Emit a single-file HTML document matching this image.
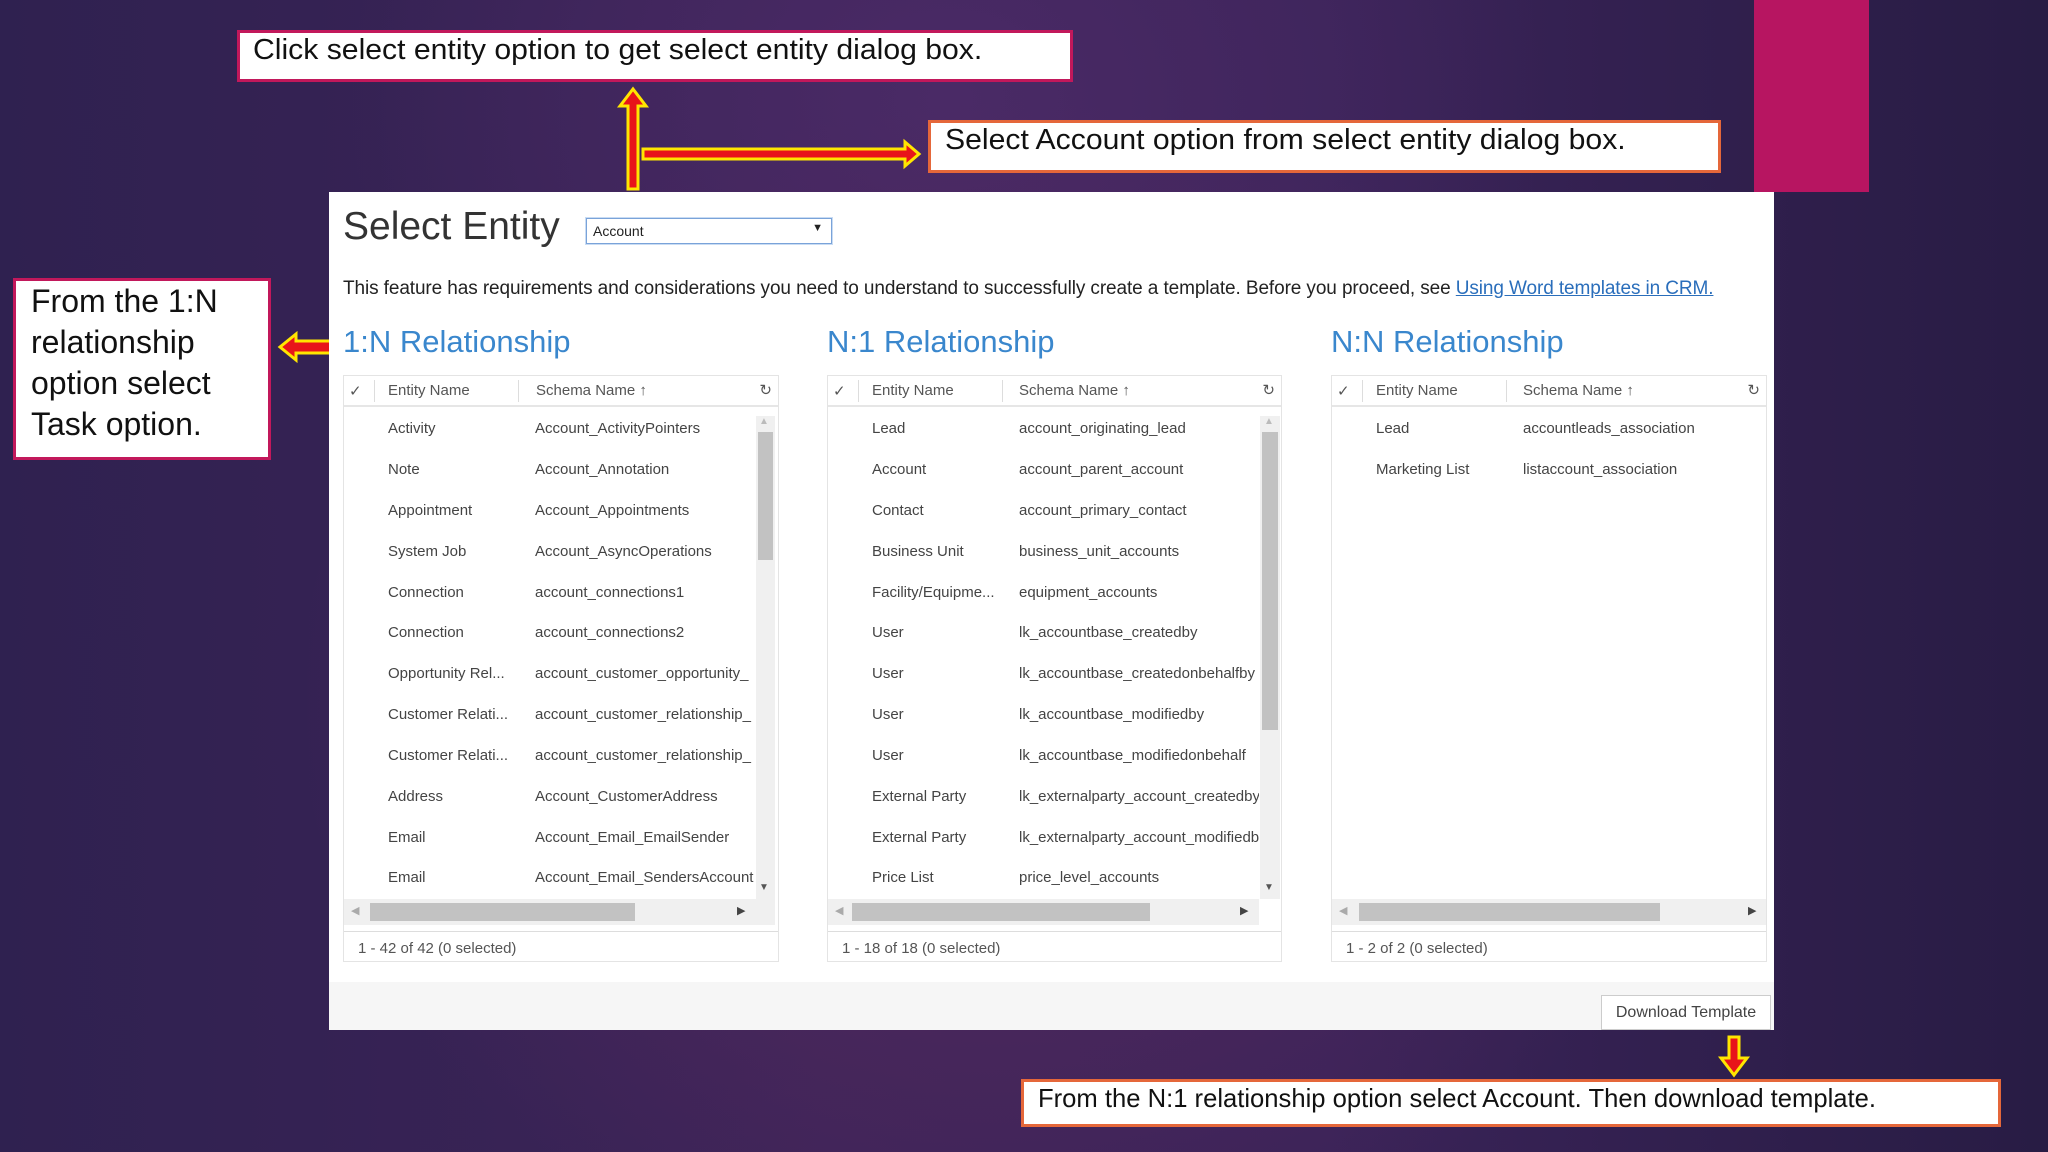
<!DOCTYPE html>
<html><head><meta charset="utf-8"><style>
*{margin:0;padding:0;box-sizing:border-box}
body{width:2048px;height:1152px;overflow:hidden;position:relative;font-family:"Liberation Sans",sans-serif;
background:radial-gradient(ellipse 700px 600px at 1000px 700px,#55295f 0%,rgba(85,41,95,0) 100%),radial-gradient(ellipse 600px 500px at 950px 100px,#4a2a66 0%,rgba(74,42,102,0) 100%),linear-gradient(90deg,#2f2150 0%,#3d2458 40%,#3a2358 65%,#281c44 100%);}
.abs{position:absolute}
.note{position:absolute;background:#fff;color:#111;white-space:nowrap;overflow:hidden}
.dlg{position:absolute;left:329px;top:192px;width:1445px;height:838px;background:#fff}
.grid{position:absolute;top:375px;height:587px;border:1px solid #e4e4e4;background:#fff}
.hd{position:absolute;left:0;right:0;top:0;height:31px;border-bottom:2px solid #e6e6e6;font-size:15px;color:#555}
.hd span{position:absolute;top:6px}
.row{position:absolute;font-size:15px;color:#444;white-space:nowrap}
.vs{position:absolute;background:#f0f0f0}
.th{position:absolute;background:#c2c2c2}
.ft{position:absolute;left:0;right:0;top:555px;height:1px;background:#ddd}
.fc{position:absolute;top:564px;left:14px;font-size:15px;color:#555}
h2{position:absolute;top:324px;font-weight:normal;font-size:31px;color:#3a87cd}
</style></head><body>
<div class="note" style="left:237px;top:30px;width:836px;height:52px;border:3px solid #c2185b;font-size:29px;padding:0 0 0 13px;line-height:34px"><span style="display:inline-block;transform:scaleX(1.04);transform-origin:left">Click select entity option to get select entity dialog box.</span></div>
<div class="note" style="left:928px;top:120px;width:793px;height:53px;border:3px solid #e5673a;font-size:29px;padding:0 0 0 14px;line-height:34px"><span style="display:inline-block;transform:scaleX(1.04);transform-origin:left">Select Account option from select entity dialog box.</span></div>
<div class="abs" style="left:1754px;top:0;width:115px;height:192px;background:#b71561"></div>
<div class="note" style="left:13px;top:278px;width:258px;height:182px;border:3px solid #c2185b;font-size:32px;padding:0 0 0 15px;line-height:41px;white-space:normal">From the 1:N relationship option select Task option.</div>
<div class="note" style="left:1021px;top:1079px;width:980px;height:48px;border:3px solid #e5673a;font-size:26px;padding:0 0 0 14px;line-height:32px"><span style="display:inline-block;transform:scaleX(0.985);transform-origin:left">From the N:1 relationship option select Account. Then download template.</span></div>
<svg class="abs" style="left:0;top:0" width="2048" height="1152">
<g fill="#e8141a" stroke="#ffe600" stroke-width="3">
<path d="M628 189 L628 106 L620 106 L633 89 L646 106 L638 106 L638 189 Z"/>
<path d="M643 149 L905 149 L905 142 L919 154 L905 166 L905 159 L643 159 Z"/>
<path d="M342 341 L296 341 L296 334 L280 347 L296 360 L296 353 L342 353 Z"/>
<path d="M1729 1037 L1739 1037 L1739 1058 L1747 1058 L1734 1075 L1721 1058 L1729 1058 Z"/>
</g></svg>
<div class="dlg">
<div class="abs" style="left:14px;top:13px;font-size:39px;color:#333;font-weight:300">Select Entity</div>
<div class="abs" style="left:257px;top:26px;width:246px;height:26px;border:1px solid #7aa3d9;box-shadow:0 0 0 1px #c9dcf3;font-size:14px;color:#222;padding:4px 6px">Account<span style="position:absolute;right:8px;top:3px;font-size:11px">▼</span></div>
<div class="abs" style="left:14px;top:86px;font-size:19px;color:#222;white-space:nowrap;letter-spacing:-0.1px">This feature has requirements and considerations you need to understand to successfully create a template. Before you proceed, see <span style="color:#2a6ebb;text-decoration:underline">Using Word templates in CRM.</span></div>
<div class="abs" style="left:0;top:790px;width:1445px;height:48px;background:#f6f6f6"></div>
<div class="abs" style="left:1272px;top:803px;width:170px;height:35px;border:1px solid #ccc;background:#fff;font-size:16px;color:#444;text-align:center;line-height:33px">Download Template</div>
</div>
<h2 style="left:343px">1:N Relationship</h2>
<h2 style="left:827px">N:1 Relationship</h2>
<h2 style="left:1331px">N:N Relationship</h2>

<div class="grid" style="left:343px;width:436px">
<div class="hd"><span style="left:5px">✓</span><span style="left:44px">Entity Name</span><span style="left:192px">Schema Name ↑</span><span style="right:6px;top:5px">↻</span><div class="abs" style="left:30px;top:4px;width:1px;height:22px;background:#ddd"></div><div class="abs" style="left:174px;top:4px;width:1px;height:22px;background:#ddd"></div></div>
<div class="abs" style="left:0;top:40px;width:410px;height:480px;overflow:hidden">
<div class="row" style="left:44px;top:4px">Activity</div><div class="row" style="left:191px;top:4px">Account_ActivityPointers</div>
<div class="row" style="left:44px;top:45px">Note</div><div class="row" style="left:191px;top:45px">Account_Annotation</div>
<div class="row" style="left:44px;top:86px">Appointment</div><div class="row" style="left:191px;top:86px">Account_Appointments</div>
<div class="row" style="left:44px;top:127px">System Job</div><div class="row" style="left:191px;top:127px">Account_AsyncOperations</div>
<div class="row" style="left:44px;top:168px">Connection</div><div class="row" style="left:191px;top:168px">account_connections1</div>
<div class="row" style="left:44px;top:208px">Connection</div><div class="row" style="left:191px;top:208px">account_connections2</div>
<div class="row" style="left:44px;top:249px">Opportunity Rel...</div><div class="row" style="left:191px;top:249px">account_customer_opportunity_</div>
<div class="row" style="left:44px;top:290px">Customer Relati...</div><div class="row" style="left:191px;top:290px">account_customer_relationship_</div>
<div class="row" style="left:44px;top:331px">Customer Relati...</div><div class="row" style="left:191px;top:331px">account_customer_relationship_</div>
<div class="row" style="left:44px;top:372px">Address</div><div class="row" style="left:191px;top:372px">Account_CustomerAddress</div>
<div class="row" style="left:44px;top:413px">Email</div><div class="row" style="left:191px;top:413px">Account_Email_EmailSender</div>
<div class="row" style="left:44px;top:453px">Email</div><div class="row" style="left:191px;top:453px">Account_Email_SendersAccount</div>
</div>
<div class="vs" style="left:412px;top:40px;width:19px;height:483px"></div><div class="th" style="left:414px;top:56px;width:15px;height:128px"></div>
<div class="abs" style="left:415px;top:40px;font-size:10px;color:#bbb">▲</div><div class="abs" style="left:415px;top:506px;font-size:10px;color:#555">▼</div>
<div class="vs" style="left:0;top:523px;width:431px;height:26px"></div><div class="th" style="left:26px;top:527px;width:265px;height:18px"></div>
<div class="abs" style="left:7px;top:528px;font-size:11px;color:#aaa">◀</div><div class="abs" style="left:393px;top:528px;font-size:11px;color:#444">▶</div>
<div class="ft"></div><div class="fc">1 - 42 of 42 (0 selected)</div>
</div>

<div class="grid" style="left:827px;width:455px">
<div class="hd"><span style="left:5px">✓</span><span style="left:44px">Entity Name</span><span style="left:191px">Schema Name ↑</span><span style="right:6px;top:5px">↻</span><div class="abs" style="left:30px;top:4px;width:1px;height:22px;background:#ddd"></div><div class="abs" style="left:174px;top:4px;width:1px;height:22px;background:#ddd"></div></div>
<div class="abs" style="left:0;top:40px;width:431px;height:480px;overflow:hidden">
<div class="row" style="left:44px;top:4px">Lead</div><div class="row" style="left:191px;top:4px">account_originating_lead</div>
<div class="row" style="left:44px;top:45px">Account</div><div class="row" style="left:191px;top:45px">account_parent_account</div>
<div class="row" style="left:44px;top:86px">Contact</div><div class="row" style="left:191px;top:86px">account_primary_contact</div>
<div class="row" style="left:44px;top:127px">Business Unit</div><div class="row" style="left:191px;top:127px">business_unit_accounts</div>
<div class="row" style="left:44px;top:168px">Facility/Equipme...</div><div class="row" style="left:191px;top:168px">equipment_accounts</div>
<div class="row" style="left:44px;top:208px">User</div><div class="row" style="left:191px;top:208px">lk_accountbase_createdby</div>
<div class="row" style="left:44px;top:249px">User</div><div class="row" style="left:191px;top:249px">lk_accountbase_createdonbehalfby</div>
<div class="row" style="left:44px;top:290px">User</div><div class="row" style="left:191px;top:290px">lk_accountbase_modifiedby</div>
<div class="row" style="left:44px;top:331px">User</div><div class="row" style="left:191px;top:331px">lk_accountbase_modifiedonbehalf</div>
<div class="row" style="left:44px;top:372px">External Party</div><div class="row" style="left:191px;top:372px">lk_externalparty_account_createdby</div>
<div class="row" style="left:44px;top:413px">External Party</div><div class="row" style="left:191px;top:413px">lk_externalparty_account_modifiedby</div>
<div class="row" style="left:44px;top:453px">Price List</div><div class="row" style="left:191px;top:453px">price_level_accounts</div>
</div>
<div class="vs" style="left:432px;top:40px;width:20px;height:483px"></div><div class="th" style="left:434px;top:56px;width:16px;height:298px"></div>
<div class="abs" style="left:436px;top:40px;font-size:10px;color:#bbb">▲</div><div class="abs" style="left:436px;top:506px;font-size:10px;color:#555">▼</div>
<div class="vs" style="left:0;top:523px;width:431px;height:26px"></div><div class="th" style="left:24px;top:527px;width:298px;height:18px"></div>
<div class="abs" style="left:7px;top:528px;font-size:11px;color:#aaa">◀</div><div class="abs" style="left:412px;top:528px;font-size:11px;color:#444">▶</div>
<div class="ft"></div><div class="fc">1 - 18 of 18 (0 selected)</div>
</div>

<div class="grid" style="left:1331px;width:436px">
<div class="hd"><span style="left:5px">✓</span><span style="left:44px">Entity Name</span><span style="left:191px">Schema Name ↑</span><span style="right:6px;top:5px">↻</span><div class="abs" style="left:30px;top:4px;width:1px;height:22px;background:#ddd"></div><div class="abs" style="left:174px;top:4px;width:1px;height:22px;background:#ddd"></div></div>
<div class="row" style="left:44px;top:44px">Lead</div><div class="row" style="left:191px;top:44px">accountleads_association</div>
<div class="row" style="left:44px;top:85px">Marketing List</div><div class="row" style="left:191px;top:85px">listaccount_association</div>
<div class="vs" style="left:0;top:523px;width:434px;height:26px"></div><div class="th" style="left:27px;top:527px;width:301px;height:18px"></div>
<div class="abs" style="left:7px;top:528px;font-size:11px;color:#aaa">◀</div><div class="abs" style="left:416px;top:528px;font-size:11px;color:#444">▶</div>
<div class="ft"></div><div class="fc">1 - 2 of 2 (0 selected)</div>
</div>
</body></html>
